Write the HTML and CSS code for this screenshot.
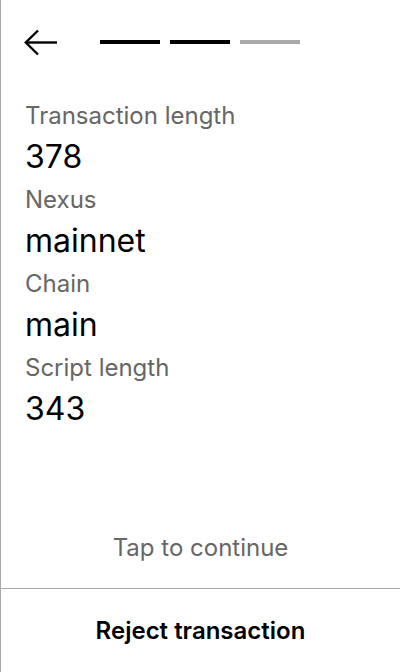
FILE: index.html
```html
<!DOCTYPE html>
<html lang="en">
<head>
<meta charset="utf-8">
<title>Transaction</title>
<link rel="stylesheet" href="styles.css">
</head>
<body>
<div class="screen">
  <header class="header">
    <button class="back" aria-label="Back">
      <svg width="34" height="28" viewBox="0 0 34 28" fill="none" stroke="#000" stroke-width="2.4">
        <path d="M14 1.5 L1.8 13.5 L14 25.5"/>
        <path d="M1.8 13.5 H33"/>
      </svg>
    </button>
    <div class="steps">
      <span class="step done"></span>
      <span class="step done"></span>
      <span class="step"></span>
    </div>
  </header>
  <main class="details">
    <div class="label">Transaction length</div>
    <div class="value">378</div>
    <div class="label">Nexus</div>
    <div class="value">mainnet</div>
    <div class="label">Chain</div>
    <div class="value">main</div>
    <div class="label">Script length</div>
    <div class="value">343</div>
  </main>
  <div class="tap">Tap to continue</div>
  <footer class="footer">
    <button class="reject">Reject transaction</button>
  </footer>
</div>
</body>
</html>
```
FILE: styles.css
```css
* { box-sizing: border-box; }
html, body { margin: 0; padding: 0; background: #fff; }
body { font-family: Inter, "Noto Sans", sans-serif; color: #000; }
.screen {
  height: 672px;
  border-left: 1px solid #aaa;
  display: flex;
  flex-direction: column;
}
.header {
  display: flex;
  align-items: center;
  height: 86px;
  padding-left: 23px;
}
.back {
  background: none;
  border: 0;
  padding: 0;
  width: 34px;
  height: 28px;
  display: flex;
}
.steps {
  display: flex;
  gap: 10px;
  margin-left: 42px;
  margin-top: -2px;
}
.step {
  width: 60px;
  height: 4px;
  background: #aaa;
}
.step.done { background: #000; }
.details {
  padding: 14px 24px 0;
  flex: 1;
}
.label {
  font-size: 24px;
  line-height: 32px;
  color: #666;
}
.value {
  font-size: 32px;
  line-height: 52px;
  margin-top: -1px;
  margin-bottom: 1px;
}
.tap {
  text-align: center;
  font-size: 24px;
  line-height: 32px;
  color: #666;
  padding-bottom: 24px;
}
.footer {
  border-top: 1px solid #aaa;
  height: 84px;
  display: flex;
}
.reject {
  flex: 1;
  background: none;
  border: 0;
  font-family: Inter, "Noto Sans", sans-serif;
  font-size: 24px;
  font-weight: 600;
  color: #000;
  padding: 0;
}
```
